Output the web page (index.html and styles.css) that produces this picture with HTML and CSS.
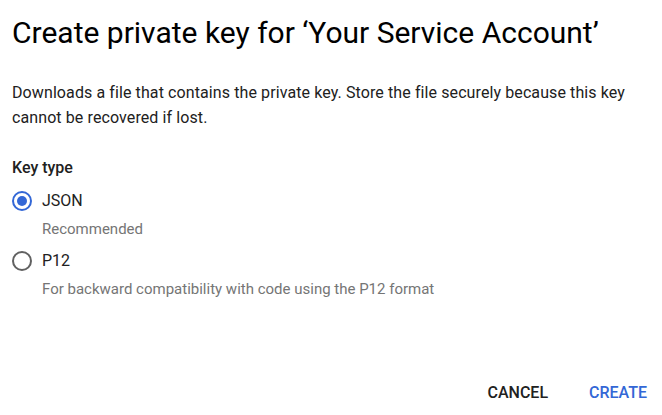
FILE: index.html
```html
<!DOCTYPE html>
<html>
<head>
<meta charset="utf-8">
<link rel="stylesheet" href="styles.css">
</head>
<body>
<div class="dialog">
  <h1 class="title">Create private key for ‘Your Service Account’</h1>
  <p class="desc">Downloads a file that contains the private key. Store the file securely because this key cannot be recovered if lost.</p>
  <div class="label">Key type</div>
  <div class="options">
    <div class="option">
      <span class="radio checked"></span>
      <div class="opt-text">
        <div class="opt-name">JSON</div>
        <div class="opt-hint">Recommended</div>
      </div>
    </div>
    <div class="option">
      <span class="radio"></span>
      <div class="opt-text">
        <div class="opt-name">P12</div>
        <div class="opt-hint">For backward compatibility with code using the P12 format</div>
      </div>
    </div>
  </div>
  <div class="actions">
    <button class="btn">CANCEL</button>
    <button class="btn primary">CREATE</button>
  </div>
</div>
</body>
</html>
```
FILE: styles.css
```css
html, body { margin: 0; padding: 0; background: #fff; }
body { font-family: Roboto, "Noto Sans", sans-serif; color: #212121; }
.dialog { width: 662px; height: 415px; box-sizing: border-box; padding: 13px 12px 0 12px; display: flex; flex-direction: column; }
.title { margin: 0; font-size: 30px; font-weight: 400; line-height: 40px; color: #000; }
.desc { margin: 27px 0 0 0; font-size: 16px; line-height: 25px; color: #212121; width: 630px; letter-spacing: 0.1px; }
.label { margin-top: 26px; font-size: 16px; line-height: 24px; font-weight: 500; color: #212121; }
.options { margin-top: 11px; display: flex; flex-direction: column; gap: 12px; }
.option { display: flex; gap: 10px; align-items: flex-start; }
.radio { width: 16px; height: 16px; border: 2px solid #616161; border-radius: 50%; flex: none; margin-top: 0px; position: relative; }
.radio.checked { border-color: #3367d6; }
.radio.checked::after { content: ""; position: absolute; left: 3px; top: 3px; width: 10px; height: 10px; border-radius: 50%; background: #3367d6; }
.opt-name { font-size: 16px; line-height: 20px; color: #212121; }
.opt-hint { margin-top: 8px; font-size: 15px; line-height: 20px; color: #757575; }
.actions { margin-top: auto; margin-bottom: 7px; display: flex; justify-content: flex-end; gap: 41px; padding-right: 3px; }
.btn { background: none; border: none; font-family: inherit; font-size: 16px; font-weight: 500; padding: 6px 0; color: #212121; }
.btn.primary { color: #3367d6; }
```
